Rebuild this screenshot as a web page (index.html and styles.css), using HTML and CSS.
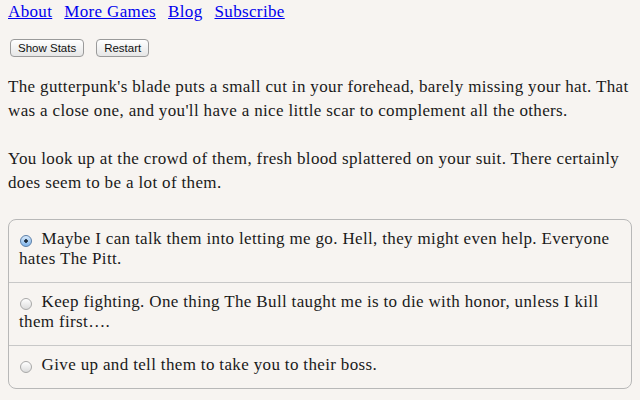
FILE: index.html
```html
<!DOCTYPE html>
<html lang="en">
<head>
    <meta charset="UTF-8">
    <title>Choice of the Pitt</title>
    <link rel="stylesheet" href="styles.css">
</head>
<body>
    <div class="links">
        <a href="#">About</a>
        <a href="#">More Games</a>
        <a href="#">Blog</a>
        <a href="#">Subscribe</a>
    </div>

    <div class="buttons">
        <button class="btn">Show Stats</button>
        <button class="btn">Restart</button>
    </div>

    <div class="text">
        <p>The gutterpunk's blade puts a small cut in your forehead, barely missing your hat. That was a close one, and you'll have a nice little scar to complement all the others.</p>
        <p>You look up at the crowd of them, fresh blood splattered on your suit. There certainly does seem to be a lot of them.</p>
    </div>

    <form class="choices">
        <label class="choice">
            <input type="radio" name="choice" checked>
            Maybe I can talk them into letting me go. Hell, they might even help. Everyone hates The Pitt.
        </label>
        <label class="choice">
            <input type="radio" name="choice">
            Keep fighting. One thing The Bull taught me is to die with honor, unless I kill them first….
        </label>
        <label class="choice">
            <input type="radio" name="choice">
            Give up and tell them to take you to their boss.
        </label>
    </form>
</body>
</html>
```

FILE: styles.css
```css
body {
    margin: 0;
    padding: 0 8px;
    background-color: #f7f4f1;
    color: #1a1a1a;
    font-family: "Liberation Serif", serif;
    font-size: 17px;
    letter-spacing: 0.35px;
    line-height: 24px;
}
.links {
    line-height: 24px;
    display: flex;
    gap: 12px;
}
.links a {
    color: #0000ee;
}
.buttons {
    margin-top: 15px;
    display: flex;
    gap: 12px;
    padding-left: 2px;
}
.btn {
    font-family: "Liberation Sans", sans-serif;
    font-size: 11.5px;
    letter-spacing: 0;
    height: 18px;
    padding: 0 7px;
    border: 1px solid #9a9a9a;
    border-radius: 4px;
    background: linear-gradient(#ffffff, #e6e6e6);
    color: #111;
    line-height: 16px;
}
.text {
    margin-top: 18px;
}
.text p {
    margin: 0 0 24px 0;
}
.choices {
    margin-top: 23px;
    border: 1px solid #b8b8b8;
    border-radius: 8px;
    display: flex;
    flex-direction: column;
}
.choice {
    display: block;
    padding: 9px 10px 13px;
    line-height: 20px;
    border-top: 1px solid #c8c8c8;
}
.choice:first-child {
    border-top: none;
}
.choice input {
    appearance: none;
    width: 12px;
    height: 12px;
    margin: 0 5px 0 1px;
    border: 1px solid #a8a8a8;
    border-radius: 50%;
    background: linear-gradient(#ffffff, #dcdcdc);
    vertical-align: -3px;
}
.choice input:checked {
    border-color: #5a7ea8;
    background: radial-gradient(circle, #1b2a3a 0, #1b2a3a 1.5px, transparent 2px),
        linear-gradient(#d7e9fb, #7fb4ea);
}
```
